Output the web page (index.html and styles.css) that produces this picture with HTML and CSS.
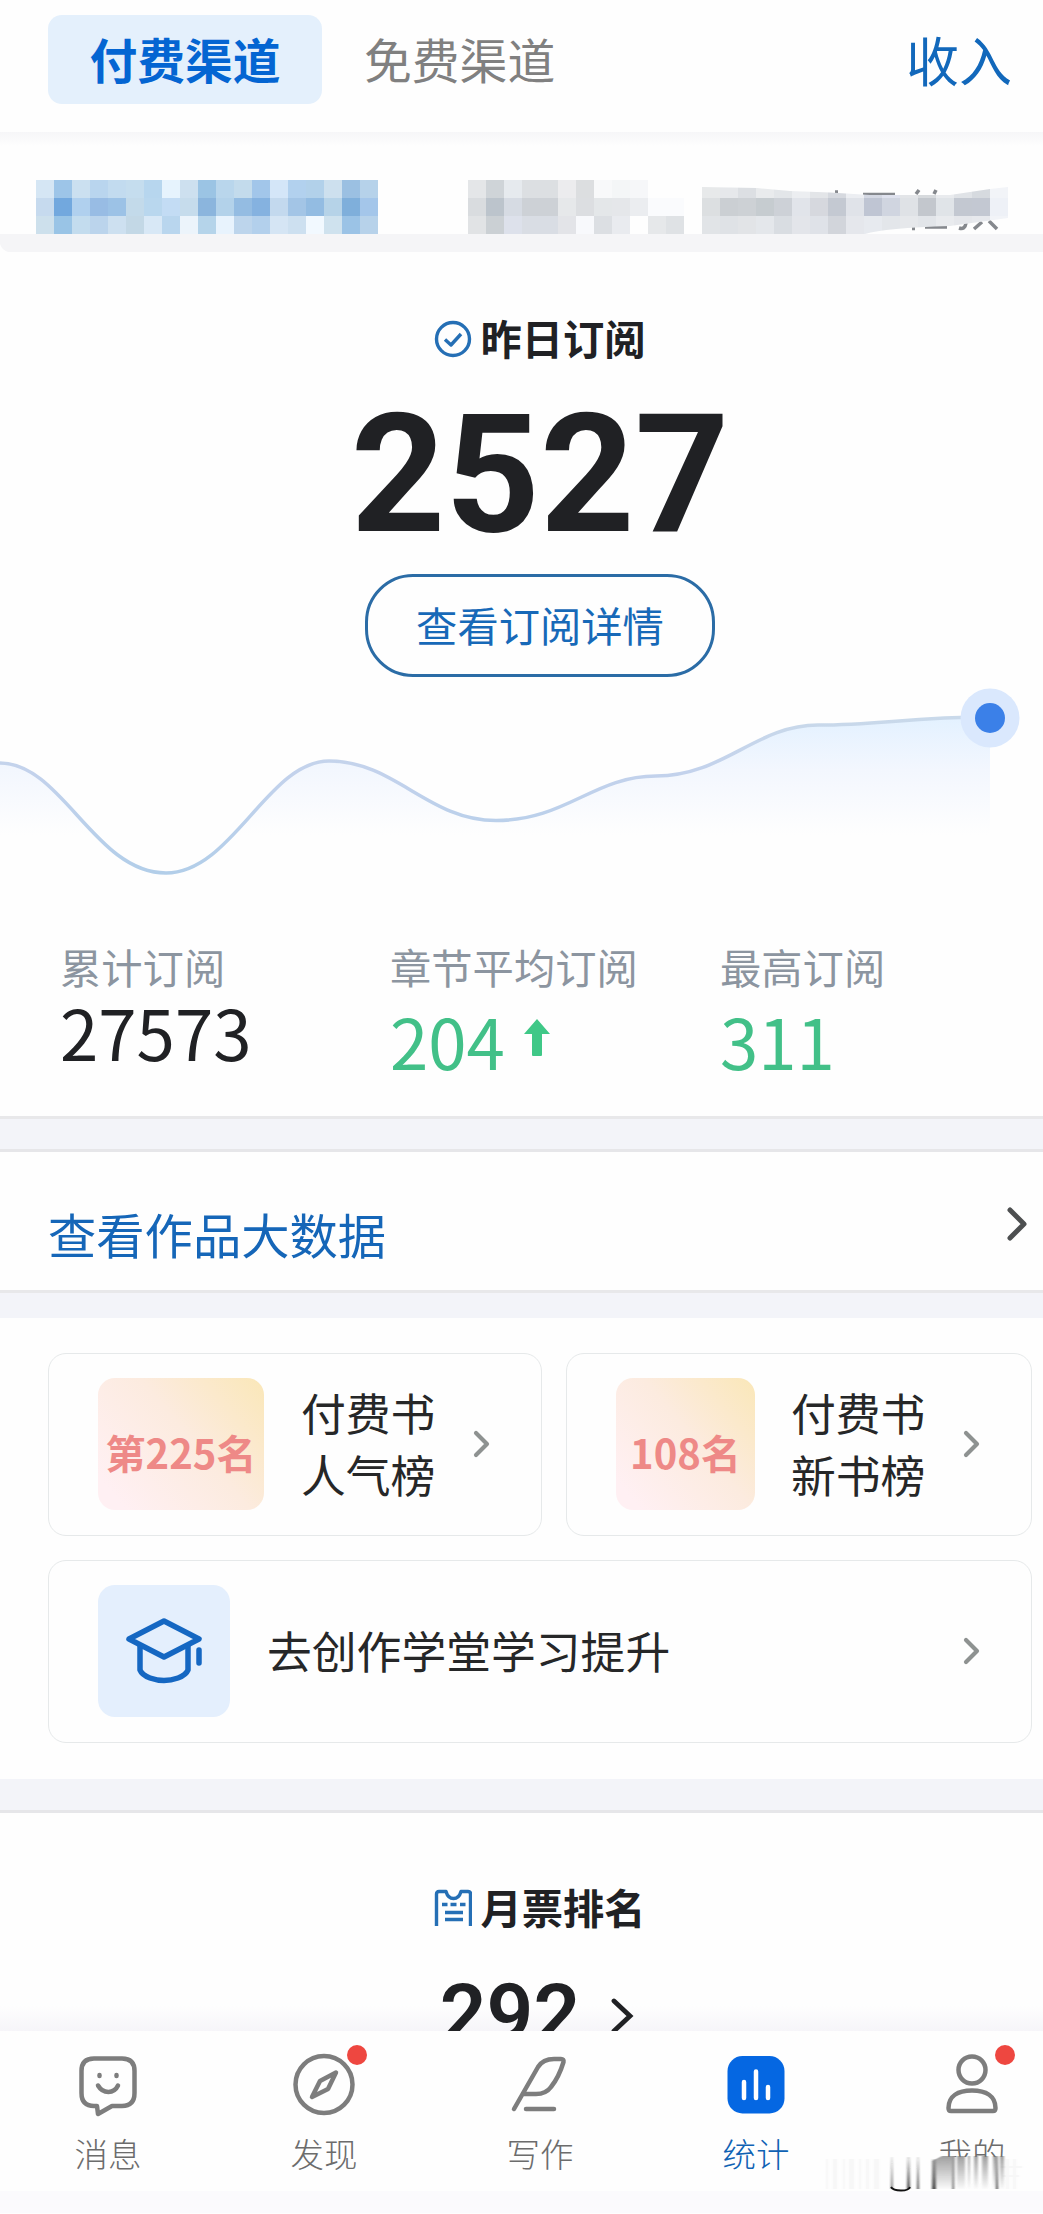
FILE: index.html
```html
<!DOCTYPE html>
<html lang="zh-CN">
<head>
    <meta charset="UTF-8">
    <meta name="viewport" content="width=device-width, initial-scale=1.0">
    <title>统计</title>
    <link rel="stylesheet" href="styles.css">
</head>
<body>
    <div class="app">
        <header class="topbar">
            <div class="tab active">付费渠道</div>
            <div class="tab">免费渠道</div>
            <a class="income">收入</a>
        </header>

        <div class="book-row">
            <svg id="mosaic" width="1043" height="102" viewBox="0 150 1043 102">
                <defs>
                    <clipPath id="torn">
                        <path d="M702 187L757 188L790 191Q830 192 870 195L950 195L990 189L1008 187V218L950 226Q885 228 865 234H702Z"/>
                    </clipPath>
                </defs>
                <path class="band" d="M0 234H1043V252H8Q2 250 0 244Z"/>
                <g class="ink">
                    <path d="M835 192h3M863 194.500h32M916 194l3-4M934 194l2-4M912 228.500h3M925 227h22M959 228q6 2 7-5M974 229l8-7M989 221l8 8"/>
                </g>
            </svg>
        </div>

        <section class="summary">
            <div class="title">
                <svg width="38" height="38" viewBox="0 0 38 38"><circle cx="19" cy="19" r="16.500"/><path d="M11 19.500l6 5.500 10-11"/></svg>
                <span>昨日订阅</span>
            </div>
            <div class="total">2527</div>
            <a class="detail-btn">查看订阅详情</a>
        </section>

        <svg class="chart" width="1043" height="210" viewBox="0 680 1043 210">
            <defs>
                <linearGradient id="area" x1="0" y1="717" x2="0" y2="835" gradientUnits="userSpaceOnUse">
                    <stop offset="0" stop-color="#e3f1ff"/>
                    <stop offset="0.45" stop-color="#f3f7fe"/>
                    <stop offset="1" stop-color="#fefefe"/>
                </linearGradient>
                <linearGradient id="stroke" x1="0" y1="717" x2="0" y2="875" gradientUnits="userSpaceOnUse">
                    <stop offset="0" stop-color="#c9d9ea"/>
                    <stop offset="0.35" stop-color="#c3d2ec"/>
                    <stop offset="1" stop-color="#b2cee9"/>
                </linearGradient>
            </defs>
            <path fill="url(#area)" d="M0 763C62 763 95 873 166 873C232 873 268 761 329 761C395 761 428 820.500 496 820.500C566 820.500 594 776 656 776C724 776 756 725 818 725C880 725 910 717 990 717V835H0Z"/>
            <path fill="none" stroke="url(#stroke)" stroke-width="3.500" d="M0 763C62 763 95 873 166 873C232 873 268 761 329 761C395 761 428 820.500 496 820.500C566 820.500 594 776 656 776C724 776 756 725 818 725C880 725 910 717 990 717"/>
            <circle cx="990" cy="718" r="29.500" fill="#dae8fd"/>
            <circle cx="990" cy="718" r="15" fill="#3b80e8"/>
        </svg>

        <div class="stats">
            <div class="stat">
                <div class="stat-label">累计订阅</div>
                <div class="stat-value">27573</div>
            </div>
            <div class="stat up">
                <div class="stat-label">章节平均订阅</div>
                <div class="stat-value">204<svg width="26" height="38" viewBox="0 0 26 38"><path d="M13 0L26 15H18V36Q18 37 17 37H9Q8 37 8 36V15H0Z" fill="#3fc887"/></svg></div>
            </div>
            <div class="stat up">
                <div class="stat-label">最高订阅</div>
                <div class="stat-value">311</div>
            </div>
        </div>

        <div class="divider both"></div>

        <a class="data-link">
            <span>查看作品大数据</span>
            <svg class="arrow dark" width="24" height="36" viewBox="0 0 24 36"><path d="M5 4L19 18L5 32"/></svg>
        </a>

        <div class="divider thin"></div>

        <section class="cards">
            <div class="card first">
                <div class="badge">第225名</div>
                <div class="card-text">付费书<br>人气榜</div>
                <svg class="arrow" width="20" height="28" viewBox="0 0 20 28"><path d="M4 3L15 14L4 25"/></svg>
            </div>
            <div class="card second">
                <div class="badge small">108名</div>
                <div class="card-text">付费书<br>新书榜</div>
                <svg class="arrow" width="20" height="28" viewBox="0 0 20 28"><path d="M4 3L15 14L4 25"/></svg>
            </div>
            <div class="card wide">
                <div class="school">
                    <svg width="80" height="70" viewBox="124 1614 80 70"><path d="M140 1644V1668Q142 1673 150 1676Q164 1681 178 1676Q186 1673 188 1668V1644M199 1648V1661"/><path d="M164 1619L199 1637L164 1655L129 1637Z"/></svg>
                </div>
                <div class="card-text">去创作学堂学习提升</div>
                <svg class="arrow" width="20" height="28" viewBox="0 0 20 28"><path d="M4 3L15 14L4 25"/></svg>
            </div>
        </section>

        <div class="divider bottom"></div>

        <section class="ticket">
            <div class="title">
                <svg width="38" height="38" viewBox="0 0 38 38"><path d="M2.500 37V5Q2.500 2.500 5 2.500H12Q14 9.500 19.500 9.500T27 2.500H34Q36.500 2.500 36.500 5V37"/><path d="M8 15.500h5.500M16.500 15.500h6M26 15.500h5.500M11 23.500h18M11 30.500h18"/></svg>
                <span>月票排名</span>
            </div>
            <div class="rank">292<svg width="24" height="36" viewBox="0 0 24 36"><path d="M4 3L20 18L4 33"/></svg></div>
        </section>

        <nav class="nav">
            <a class="nav-item">
                <svg width="72" height="72" viewBox="72 2050 72 72"><path d="M94 2059.500H122Q134.500 2059.500 134.500 2072V2094Q134.500 2107 122 2107H112L98 2115L97 2107H94Q81.500 2107 81.500 2094V2072Q81.500 2059.500 94 2059.500ZM98 2086.500C103 2095 114 2095 118 2086.500"/><path d="M99.500 2076v1M116.500 2076v1"/></svg>
                <span>消息</span>
            </a>
            <a class="nav-item">
                <svg width="72" height="72" viewBox="288 2050 72 72"><circle cx="324" cy="2085.500" r="28.500"/><path d="M336 2073.500L320 2082L312 2098L328 2090Z"/></svg>
                <span>发现</span>
                <i class="dot"></i>
            </a>
            <a class="nav-item">
                <svg width="72" height="72" viewBox="504 2050 72 72"><path d="M514 2110L538 2068Q543 2060 554 2060H561Q564 2060 563.500 2063Q559 2078 551 2088Q546 2095 536 2095H524M526 2110H554"/></svg>
                <span>写作</span>
            </a>
            <a class="nav-item current">
                <svg width="72" height="72" viewBox="720 2050 72 72"><rect class="solid" x="727.500" y="2057" width="57" height="57.500" rx="15"/><path class="bars" d="M744 2083V2099M756 2072.500V2099M768 2088V2099"/></svg>
                <span>统计</span>
            </a>
            <a class="nav-item mine">
                <svg width="72" height="72" viewBox="936 2050 72 72"><circle cx="972" cy="2071" r="13.500"/><path d="M951 2112Q948.500 2112 948.500 2109C948.500 2097 958 2091.500 972 2091.500S995.500 2097 995.500 2109Q995.500 2112 993 2112Z"/></svg>
                <span>我的</span>
                <i class="dot"></i>
            </a>
            <svg class="smear" width="204" height="36" viewBox="825 2157 204 36">
                <defs>
                    <linearGradient id="fade" x1="0" y1="2158" x2="0" y2="2190" gradientUnits="userSpaceOnUse">
                        <stop offset="0" stop-color="#222" stop-opacity="0.1"/>
                        <stop offset="1" stop-color="#222" stop-opacity="0.8"/>
                    </linearGradient>
                    <linearGradient id="fog" x1="0" y1="2157" x2="0" y2="2190" gradientUnits="userSpaceOnUse">
                        <stop offset="0" stop-color="#777" stop-opacity="0.7"/>
                        <stop offset="1" stop-color="#777" stop-opacity="0.03"/>
                    </linearGradient>
                    <filter id="soft"><feGaussianBlur stdDeviation="0.9 0"/></filter>
                </defs>
                <path fill="#fefefe" d="M825 2158H1025V2192H825Z"/>
                <g filter="url(#soft)">
                    <path fill="#777" fill-opacity="0.05" d="M826 2160h2v30h-2zM833 2160h4v30h-4zM843 2160h2v30h-2zM849 2160h5v30h-5zM859 2160h2v30h-2zM866 2160h3v30h-3zM874 2160h5v30h-5zM1006 2160h3v30h-3zM1013 2160h3v30h-3zM1000 2167h22v2h-22zM1003 2176h16v2h-16z"/>
                    <path fill="url(#fog)" d="M932 2162L942 2157H955V2190H932ZM957 2157h8v33h-8zM968 2157h2v33h-2zM974 2157h4v33h-4zM982 2157h6v33h-6zM993 2157h5v33h-5zM1000 2157h4v33h-4z"/>
                    <path fill="url(#fade)" d="M891 2158h1.500v32H891zM907 2158h3v32h-3zM917 2158h2v32h-2zM932 2160h4v30h-4zM952.500 2158h1.500v32h-1.500zM996 2158h2v32h-2z"/>
                </g>
                <path fill="none" stroke="#111" stroke-width="1.800" d="M891 2188Q893 2191.500 901 2191.500T910 2188"/>
            </svg>
        </nav>
    </div>

    <script>
        // blurred book name and update info, 18px cells
        const blocks = [
            { x: 36, w: 18, rows: [
                'd5e6f4 9dc5e8 cbe0f0 b9d5ee c2dbef c5ddee b7d6ee e6f3fd cde0ef 9bc4e4 b9d6ec c3dbec a2c6ea d4e6f8 b2d1ee b2d1ea cde0ee 9bc0e2 b6d2ea',
                'c6daee 72a8de b0d0ee 98bce4 9cc2e6 c3daea b9d7ee c3dcf4 c6dcec 8bb5dd b3d2ea 94bce2 85b2e0 c3d9ee a3c5e6 93bce2 b6d3e8 7fafdb a4c6ea',
                'cde0ec 99c4e6 c3dcee bbd4ec cde0f0 c3d8e6 d8e8f6 b9d6ee ecf4fb b5d4ea e8f3fd bdd5ec b3d0ec d5e5f4 cde0f0 f2f9ff cfe2ee 9bc3e6 b7d2ea'
            ] },
            { x: 468, w: 18, rows: [
                'e4e6e8 cfd4d8 e6eaee dcdfe2 dcdfe2 ececee dcdee0 f8f9fa f4f6f7 f6f7f9 fefefe fefefe',
                'd9dcdf bcc4cc d6dbe3 cdd1d6 cdd1d6 e6e8ea dcdee1 e4e7e9 e5e7ea ebedf0 fafbfd fafbfd',
                'e1e3e5 cbd0d4 dde1eb d9dde4 d9dde4 e3e4e8 f8f9fc dcdfe3 e9ebef fefefe e6e8ea dfe2e5'
            ] },
            { x: 702, w: 18, clip: 'url(#torn)', rows: [
                'e7e9ea e6e8eb dcdfe3 e9ebed e3e6e9 eceef1 e3e5e8 d6d9df eceef2 d4d8e3 dfe2ee e3e5e8 d7dadd e9ebee e0e3e7 d6dadf f2f4f8',
                'dcdfe1 cbcfd3 cdd1d5 c6ccd0 cdd1d7 e1e4ea d6d8de c4c9d2 e0e3e9 bfc5d3 d0d5e0 dfe2e6 c3c7cd e0e4e8 c3c8d1 c3c8d2 eef1f7',
                'e1e4e7 dfe2e6 e2e4e7 e4e7eb d9dde2 e3e5ea dfe2e8 d2d5db e5e7ec e7eaef e3e6ea e6e8eb e2e5e9 e9ebee e5e7eb e7e9ed f2f4f8'
            ] }
        ];
        const svg = document.getElementById('mosaic');
        const ns = 'http://www.w3.org/2000/svg';
        blocks.forEach(block => {
            const g = document.createElementNS(ns, 'g');
            if (block.clip) g.setAttribute('clip-path', block.clip);
            block.rows.forEach((row, r) => {
                row.split(' ').forEach((color, i) => {
                    const cell = document.createElementNS(ns, 'rect');
                    cell.setAttribute('x', block.x + i * block.w);
                    cell.setAttribute('y', 180 + r * 18);
                    cell.setAttribute('width', block.w);
                    cell.setAttribute('height', 18);
                    cell.setAttribute('fill', '#' + color);
                    g.appendChild(cell);
                });
            });
            svg.appendChild(g);
        });
    </script>
</body>
</html>
```
FILE: styles.css
```css
* { box-sizing: border-box; }
body { margin: 0; background: #fefefe; color: #202124; font-family: "Noto Sans CJK SC", sans-serif; }
svg { display: block; flex: none; }
.app { width: 1043px; height: 2214px; overflow: hidden; display: flex; flex-direction: column; }
.app > * { flex: none; }

.topbar { height: 132px; display: flex; align-items: flex-start; padding: 15px 31px 0 48px; }
.tab { height: 89px; line-height: 88px; font-size: 47.800px; color: #808080; padding-left: 42px; }
.tab.active { width: 274px; padding: 0; text-align: center; font-weight: bold; color: #0465d2; background: #e4f0fc; border-radius: 14px; }
.income { margin-left: auto; font-size: 53px; line-height: 88px; color: #1268bb; }

.book-row { height: 120px; padding-top: 18px; background: linear-gradient(#f6f6f8, #fefefe 14px); }
.band { fill: #f5f5f7; }
.ink path { fill: none; stroke: #85888d; stroke-width: 3.5; }

.summary { height: 428px; display: flex; flex-direction: column; align-items: center; padding-top: 58px; }
.title { display: flex; align-items: center; justify-content: center; gap: 8px; height: 58px; font-size: 41.300px; line-height: 54px; font-weight: bold; }
.title svg { fill: none; stroke: #256fb5; stroke-width: 3.4; stroke-linejoin: round; }
.title span { height: 58px; }
.summary .title, .ticket .title { width: 100%; padding-left: 37px; }
.total { font-family: Roboto, sans-serif; font-weight: bold; font-size: 165px; line-height: 166px; height: 206px; padding: 24px 0 0 37px; }
.detail-btn { width: 350px; height: 103px; line-height: 94px; margin-left: 37px; text-align: center; font-size: 41.300px; color: #1769b8; border: 3px solid #2b6ca6; border-radius: 48px; }

.chart { height: 210px; }

.stats { display: grid; grid-template-columns: 330px 330px 1fr; height: 226px; padding: 46px 0 0 60px; }
.stat-label { font-size: 41.300px; line-height: 60px; color: #8c95a0; }
.stat-value { display: flex; align-items: center; font-size: 69px; line-height: 80px; margin-top: -5px; color: #202124; }
.stat.up .stat-value { color: #42c088; margin-top: 4px; }
.stat-value svg { margin: 0 0 4px 19px; }

.divider { background: #f3f4f9; }
.divider.both { height: 36px; border-top: 3px solid #e8e8ea; border-bottom: 3px solid #e6e6e9; }
.divider.thin { height: 28px; border-top: 3px solid #e8e8ea; }
.divider.bottom { height: 34px; border-bottom: 3px solid #e6e6e9; }

.data-link { height: 138px; display: flex; align-items: center; justify-content: space-between; padding: 0 14px 0 48px; font-size: 48.300px; color: #1566b8; }
.data-link span { line-height: 60px; padding-top: 23px; }
.arrow { fill: none; stroke: #8e9291; stroke-width: 4.2; stroke-linecap: round; stroke-linejoin: round; }
.arrow.dark { stroke: #4d4f50; stroke-width: 5; margin-top: 6px; }

.cards { height: 461px; display: grid; grid-template-columns: 494px 466px; grid-auto-rows: 183px; gap: 24px; padding: 35px 11px 0 48px; }
.card { display: flex; align-items: center; border: 1.500px solid #e6e9ea; border-radius: 18px; padding: 0 49px 2px 49px; }
.card.second { padding-right: 49px; }
.card.wide { grid-column: 1 / 3; padding-right: 49px; }
.badge { width: 166px; height: 132px; border-radius: 17px; text-align: center; padding-top: 9px; font-size: 40px; line-height: 131px; font-weight: bold; color: #ee8987; background: linear-gradient(50deg, #fff0f3 10%, #fcebdf 55%, #fae7b8); }
.badge.small { width: 139px; }
.card-text { font-size: 44.800px; line-height: 62px; margin: -2px 0 0 37px; color: #262728; }
.second .card-text { margin-left: 36px; }
.card .arrow { margin-left: auto; }
.school { width: 132px; height: 132px; border-radius: 17px; background: #e4effd; display: flex; align-items: center; justify-content: center; }
.school svg { fill: none; stroke: #1567c2; stroke-width: 5.5; stroke-linejoin: round; stroke-linecap: round; }

.ticket { height: 218px; padding-top: 66px; overflow: hidden; background: linear-gradient(#fefefe 193px, #f6f5f9); }
.rank { display: flex; justify-content: center; align-items: center; gap: 30px; font-family: Roboto, sans-serif; font-weight: 600; font-size: 82px; line-height: 100px; margin-top: 27px; padding-left: 31px; }
.rank svg { margin-top: 4px; fill: none; stroke: #202124; stroke-width: 4.8; stroke-linecap: round; }

.nav { position: relative; height: 182px; display: grid; grid-template-columns: repeat(5, 216px); background: linear-gradient(#fefefe 160px, #fbfafd 160px); }
.nav-item { position: relative; display: flex; flex-direction: column; align-items: center; padding-top: 18px; font-size: 33.500px; font-weight: 300; color: #6c6c6c; }
.nav-item svg { fill: none; stroke: #7d7d7d; stroke-width: 4.5; stroke-linecap: round; stroke-linejoin: round; }
.nav-item span { line-height: 44px; margin-top: 10px; }
.nav-item.current { color: #0f62b4; }
.nav-item .solid { fill: #0567e2; stroke: none; }
.nav-item .bars { stroke: #fff; }
.dot { position: absolute; left: 131px; top: 14px; width: 20px; height: 20px; border-radius: 50%; background: #ee4740; }
.smear { position: absolute; left: 825px; top: 125px; }
```
